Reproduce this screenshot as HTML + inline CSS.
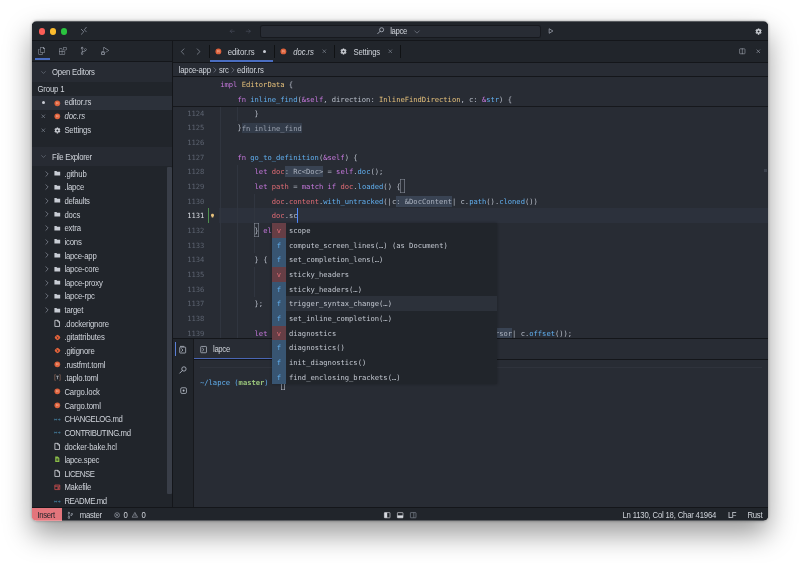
<!DOCTYPE html>
<html><head><meta charset="utf-8"><title>lapce</title>
<style>
html,body{margin:0;padding:0;background:#fff;}
body{width:800px;height:563px;position:relative;overflow:hidden;}
#shadow{position:absolute;border-radius:5px;}
#win{position:absolute;left:0;top:0;width:800px;height:563px;will-change:transform;}
#win div,#win svg{position:absolute;}
.t{white-space:pre;color:#d0d4db;}
.ui{font-family:"Liberation Sans",sans-serif;font-size:7.75px;letter-spacing:-0.16px;transform:scaleY(1.1);transform-origin:0 50%;}
.mono{font-family:"DejaVu Sans Mono","Liberation Mono",monospace;font-size:7.14px;}
.ln{color:#5c6370;text-align:right;}
.k{color:#c678dd}.y{color:#e5c07b}.b{color:#61afef}.r{color:#e06c75}.g{color:#98c379}.c{color:#56b6c2}.w{color:#b9bfca}
.h{background:#394353;color:#aab1be;padding:.9px 0;}.h2{background:#333c4a;color:#9aa1ae;}
svg{overflow:visible}
</style></head><body>

<div id="shadow" style="left:31.6px;top:21.3px;width:736.7px;height:499.5px;box-shadow:0 13px 28px rgba(0,0,0,.40),0 0 3px rgba(0,0,0,.35);"></div>
<div id="win" style="clip-path:inset(21.3px 31.7px 42.2px 31.6px round 5px);">
<div style="left:31.60px;top:21.30px;width:736.70px;height:499.50px;background:#282c34;"></div>
<div style="left:31.60px;top:21.30px;width:736.70px;height:18.70px;background:#21252b;"></div>
<div style="left:31.60px;top:40.00px;width:140.40px;height:467.00px;background:#21252b;"></div>
<div style="left:173.00px;top:41.00px;width:595.30px;height:21.00px;background:#21252b;"></div>
<div style="left:31.60px;top:40.00px;width:736.70px;height:1.00px;background:#14161a;"></div>
<div style="left:172.00px;top:41.00px;width:1.00px;height:466.00px;background:#14161a;"></div>
<div style="left:31.60px;top:61.00px;width:140.40px;height:1.00px;background:#14161a;"></div>
<div style="left:173.00px;top:62.00px;width:595.30px;height:1.00px;background:#14161a;"></div>
<div style="left:173.00px;top:76.00px;width:595.30px;height:1.00px;background:#14161a;"></div>
<div style="left:173.00px;top:106.00px;width:595.30px;height:1.00px;background:#16181c;"></div>
<div style="left:38.65px;top:28.25px;width:6.3px;height:6.3px;border-radius:50%;background:#fb5e57"></div>
<div style="left:49.85px;top:28.25px;width:6.3px;height:6.3px;border-radius:50%;background:#fbbc2e"></div>
<div style="left:61.05px;top:28.25px;width:6.3px;height:6.3px;border-radius:50%;background:#2ac43f"></div>
<svg style="left:79.70px;top:27.20px;width:8.00px;height:8.00px;color:#9da5b4" viewBox="0 0 16 16"><path d="M2.600 4.600 L7.600 9.600 L2.600 14.600" fill="none" stroke="currentColor" stroke-width="1.3" stroke-linecap="round" stroke-linejoin="round" /><path d="M12.600 0.600 L8.600 5.600 L12.600 9.600" fill="none" stroke="currentColor" stroke-width="1.3" stroke-linecap="round" stroke-linejoin="round" /></svg>
<svg style="left:228.95px;top:27.95px;width:6.50px;height:6.50px;color:#4b5160" viewBox="0 0 16 16"><path d="M13 8 H3 M7 4 L3 8 L7 12" fill="none" stroke="currentColor" stroke-width="1.5" stroke-linecap="round" stroke-linejoin="round" /></svg>
<svg style="left:245.45px;top:27.95px;width:6.50px;height:6.50px;color:#4b5160" viewBox="0 0 16 16"><path d="M3 8 H13 M9 4 L13 8 L9 12" fill="none" stroke="currentColor" stroke-width="1.5" stroke-linecap="round" stroke-linejoin="round" /></svg>
<div style="left:260.00px;top:24.60px;width:280.70px;height:13.60px;background:#282c34;border-radius:2.500px;box-shadow:inset 0 0 0 1px #17191e;"></div>
<svg style="left:376.90px;top:27.40px;width:7.40px;height:7.40px;color:#b4bac5" viewBox="0 0 16 16"><path d="M6.6 9.4 L1.6 14.4" fill="none" stroke="currentColor" stroke-width="1.8" stroke-linecap="round" stroke-linejoin="round" /><circle cx="10" cy="6" r="4.4" fill="none" stroke="currentColor" stroke-width="1.7"/></svg>
<div class="t ui" style="left:390.20px;top:25.90px;height:12px;line-height:12px;;letter-spacing:-0.332px;">lapce</div>
<svg style="left:414.20px;top:28.60px;width:6.00px;height:6.00px;color:#8c93a1" viewBox="0 0 16 16"><path d="M2 5 L8 11 L14 5" fill="none" stroke="currentColor" stroke-width="1.5" stroke-linecap="round" stroke-linejoin="round" /></svg>
<svg style="left:548.00px;top:28.40px;width:6.00px;height:6.00px;color:#aeb4c0" viewBox="0 0 16 16"><path d="M4 2.500 L13 8 L4 13.500 Z" fill="none" stroke="currentColor" stroke-width="1.8" stroke-linecap="round" stroke-linejoin="round" /></svg>
<svg style="left:754.95px;top:27.65px;width:7.10px;height:7.10px;color:#d7dae0" viewBox="0 0 16 16"><circle cx="8" cy="8" r="4" fill="none" stroke="currentColor" stroke-width="3.200"/><path d="M12.16 10.40 L14.15 11.55 M8.00 12.80 L8.00 15.10 M3.84 10.40 L1.85 11.55 M3.84 5.60 L1.85 4.45 M8.00 3.20 L8.00 0.90 M12.16 5.60 L14.15 4.45 " stroke="currentColor" stroke-width="3.400" fill="none"/></svg>
<svg style="left:38.25px;top:47.25px;width:7.50px;height:7.50px;color:#a6acb8" viewBox="0 0 24 24"><path d="M17.5 0h-9L7 1.5V6H2.5L1 7.5v15.07L2.5 24h12.07L16 22.57V18h4.7l1.3-1.43V4.5L17.5 0zm0 2.12l2.38 2.38H17.5V2.12zm-3 20.38h-12v-15H7v9.07L8.5 18h6v4.5zm6-6h-12v-15H16V6h4.5v10.5z" fill="currentColor" /></svg>
<svg style="left:59.15px;top:47.25px;width:7.50px;height:7.50px;color:#a6acb8" viewBox="0 0 24 24"><path d="M13.5 1.5L15 0h7.5L24 1.5V9l-1.5 1.5H15L13.5 9V1.5zm1.5 0V9h7.5V1.5H15zM0 15V6l1.5-1.5H9L10.5 6v7.5H18l1.5 1.5v7.5L18 24H1.5L0 22.5V15zm9-1.5V6H1.5v7.5H9zM9 15H1.5v7.5H9V15zm1.5 7.5H18V15h-7.5v7.5z" fill="currentColor" /></svg>
<svg style="left:79.85px;top:47.45px;width:7.50px;height:7.50px;color:#a6acb8" viewBox="0 0 24 24"><path d="M21.007 8.222A3.738 3.738 0 0 0 15.045 5.2a3.737 3.737 0 0 0 1.156 6.583 2.988 2.988 0 0 1-2.668 1.67h-2.99a4.456 4.456 0 0 0-2.989 1.165V7.4a3.737 3.737 0 1 0-1.494 0v9.117a3.776 3.776 0 1 0 1.816.099 2.99 2.99 0 0 1 2.668-1.667h2.99a4.484 4.484 0 0 0 4.223-3.039 3.736 3.736 0 0 0 3.25-3.687zM4.565 3.738a2.242 2.242 0 1 1 4.484 0 2.242 2.242 0 0 1-4.484 0zm4.484 16.441a2.242 2.242 0 1 1-4.484 0 2.242 2.242 0 0 1 4.484 0zm8.221-9.715a2.242 2.242 0 1 1 0-4.485 2.242 2.242 0 0 1 0 4.485z" fill="currentColor" /></svg>
<svg style="left:100.50px;top:47.20px;width:8.00px;height:8.00px;color:#a6acb8" viewBox="0 0 24 24"><path d="M10.94 13.5l-1.32 1.32a3.73 3.73 0 0 0-7.24 0L1.06 13.5 0 14.56l1.72 1.72-.22.22V18H0v1.5h1.5v.08c.077.489.214.966.41 1.42L0 22.94 1.06 24l1.65-1.65A4.308 4.308 0 0 0 6 24a4.31 4.31 0 0 0 3.29-1.65L10.94 24 12 22.94 10.09 21c.198-.464.336-.951.41-1.45v-.1H12V18h-1.5v-1.5l-.22-.22L12 14.56l-1.06-1.06zM6 13.5a2.25 2.25 0 0 1 2.25 2.25h-4.5A2.25 2.25 0 0 1 6 13.5zm3 6a3.33 3.33 0 0 1-3 3 3.33 3.33 0 0 1-3-3v-2.25h6v2.25zm14.76-9.9v1.26L13.5 17.37V15.6l8.5-5.37L9 2v9.46a5.07 5.07 0 0 0-1.5-.72V.63L8.64 0l15.12 9.6z" fill="currentColor" /></svg>
<div style="left:35.00px;top:58.00px;width:14.50px;height:2.00px;background:#4a6dc0;"></div>
<div style="left:31.60px;top:62.00px;width:140.40px;height:20.00px;background:#272b33;"></div>
<svg style="left:41.00px;top:69.70px;width:5.00px;height:5.00px;color:#8c93a1" viewBox="0 0 16 16"><path d="M2 5 L8 11 L14 5" fill="none" stroke="currentColor" stroke-width="1.5" stroke-linecap="round" stroke-linejoin="round" /></svg>
<div class="t ui" style="left:52.00px;top:67.10px;height:12px;line-height:12px;;letter-spacing:-0.203px;">Open Editors</div>
<div class="t ui" style="left:37.50px;top:83.90px;height:12px;line-height:12px;">Group 1</div>
<div style="left:31.60px;top:96.20px;width:140.40px;height:13.40px;background:#2c313a;"></div>
<div style="left:42.2px;top:101.300px;width:3px;height:3px;border-radius:50%;background:#c8ccd4"></div>
<svg style="left:53.90px;top:99.50px;width:6.60px;height:6.60px;" viewBox="0 0 16 16"><circle cx="8" cy="8" r="6.900" fill="#dd613b"/><path d="M5 5.800 H9.300 Q11 5.800 11 7.200 Q11 8.500 9.300 8.500 H6 M9.300 8.500 L11 10.800 M6 5.800 V10.800" stroke="#f3b9a3" stroke-width="1.300" fill="none" opacity=".8"/></svg>
<div class="t ui" style="left:64.40px;top:97.30px;height:12px;line-height:12px;;letter-spacing:-0.071px;">editor.rs</div>
<svg style="left:41.40px;top:114.30px;width:4.60px;height:4.60px;color:#9299a6" viewBox="0 0 16 16"><path d="M3 3 L13 13 M13 3 L3 13" fill="none" stroke="currentColor" stroke-width="1.9" stroke-linecap="round" stroke-linejoin="round" /></svg>
<svg style="left:53.90px;top:113.20px;width:6.60px;height:6.60px;" viewBox="0 0 16 16"><circle cx="8" cy="8" r="6.900" fill="#dd613b"/><path d="M5 5.800 H9.300 Q11 5.800 11 7.200 Q11 8.500 9.300 8.500 H6 M9.300 8.500 L11 10.800 M6 5.800 V10.800" stroke="#f3b9a3" stroke-width="1.300" fill="none" opacity=".8"/></svg>
<div class="t ui" style="left:64.40px;top:111.00px;height:12px;line-height:12px;font-style:italic;letter-spacing:-0.061px;">doc.rs</div>
<svg style="left:41.40px;top:128.10px;width:4.60px;height:4.60px;color:#9299a6" viewBox="0 0 16 16"><path d="M3 3 L13 13 M13 3 L3 13" fill="none" stroke="currentColor" stroke-width="1.9" stroke-linecap="round" stroke-linejoin="round" /></svg>
<svg style="left:53.80px;top:126.90px;width:6.80px;height:6.80px;color:#d7dae0" viewBox="0 0 16 16"><circle cx="8" cy="8" r="4" fill="none" stroke="currentColor" stroke-width="3.200"/><path d="M12.16 10.40 L14.15 11.55 M8.00 12.80 L8.00 15.10 M3.84 10.40 L1.85 11.55 M3.84 5.60 L1.85 4.45 M8.00 3.20 L8.00 0.90 M12.16 5.60 L14.15 4.45 " stroke="currentColor" stroke-width="3.400" fill="none"/></svg>
<div class="t ui" style="left:64.40px;top:124.80px;height:12px;line-height:12px;;letter-spacing:-0.186px;">Settings</div>
<div style="left:31.60px;top:147.00px;width:140.40px;height:19.40px;background:#272b33;"></div>
<svg style="left:41.00px;top:154.40px;width:5.00px;height:5.00px;color:#8c93a1" viewBox="0 0 16 16"><path d="M2 5 L8 11 L14 5" fill="none" stroke="currentColor" stroke-width="1.5" stroke-linecap="round" stroke-linejoin="round" /></svg>
<div class="t ui" style="left:52.00px;top:152.10px;height:12px;line-height:12px;;letter-spacing:-0.275px;">File Explorer</div>
<svg style="left:43.90px;top:170.55px;width:6.00px;height:6.00px;color:#a4aab6" viewBox="0 0 16 16"><path d="M5 2 L11 8 L5 14" fill="none" stroke="currentColor" stroke-width="1.5" stroke-linecap="round" stroke-linejoin="round" /></svg>
<svg style="left:53.95px;top:170.10px;width:6.60px;height:6.60px;color:#c8ccd4" viewBox="0 0 16 16"><path d="M1 2.500 H6 L7.500 4.500 H15 V13.500 H1 Z" fill="currentColor" /></svg>
<div class="t ui" style="left:64.40px;top:168.70px;height:12px;line-height:12px;;letter-spacing:-0.162px;">.github</div>
<svg style="left:43.90px;top:184.19px;width:6.00px;height:6.00px;color:#a4aab6" viewBox="0 0 16 16"><path d="M5 2 L11 8 L5 14" fill="none" stroke="currentColor" stroke-width="1.5" stroke-linecap="round" stroke-linejoin="round" /></svg>
<svg style="left:53.95px;top:183.74px;width:6.60px;height:6.60px;color:#c8ccd4" viewBox="0 0 16 16"><path d="M1 2.500 H6 L7.500 4.500 H15 V13.500 H1 Z" fill="currentColor" /></svg>
<div class="t ui" style="left:64.40px;top:182.34px;height:12px;line-height:12px;">.lapce</div>
<svg style="left:43.90px;top:197.83px;width:6.00px;height:6.00px;color:#a4aab6" viewBox="0 0 16 16"><path d="M5 2 L11 8 L5 14" fill="none" stroke="currentColor" stroke-width="1.5" stroke-linecap="round" stroke-linejoin="round" /></svg>
<svg style="left:53.95px;top:197.38px;width:6.60px;height:6.60px;color:#c8ccd4" viewBox="0 0 16 16"><path d="M1 2.500 H6 L7.500 4.500 H15 V13.500 H1 Z" fill="currentColor" /></svg>
<div class="t ui" style="left:64.40px;top:195.98px;height:12px;line-height:12px;;letter-spacing:-0.221px;">defaults</div>
<svg style="left:43.90px;top:211.47px;width:6.00px;height:6.00px;color:#a4aab6" viewBox="0 0 16 16"><path d="M5 2 L11 8 L5 14" fill="none" stroke="currentColor" stroke-width="1.5" stroke-linecap="round" stroke-linejoin="round" /></svg>
<svg style="left:53.95px;top:211.02px;width:6.60px;height:6.60px;color:#c8ccd4" viewBox="0 0 16 16"><path d="M1 2.500 H6 L7.500 4.500 H15 V13.500 H1 Z" fill="currentColor" /></svg>
<div class="t ui" style="left:64.40px;top:209.62px;height:12px;line-height:12px;">docs</div>
<svg style="left:43.90px;top:225.11px;width:6.00px;height:6.00px;color:#a4aab6" viewBox="0 0 16 16"><path d="M5 2 L11 8 L5 14" fill="none" stroke="currentColor" stroke-width="1.5" stroke-linecap="round" stroke-linejoin="round" /></svg>
<svg style="left:53.95px;top:224.66px;width:6.60px;height:6.60px;color:#c8ccd4" viewBox="0 0 16 16"><path d="M1 2.500 H6 L7.500 4.500 H15 V13.500 H1 Z" fill="currentColor" /></svg>
<div class="t ui" style="left:64.40px;top:223.26px;height:12px;line-height:12px;">extra</div>
<svg style="left:43.90px;top:238.75px;width:6.00px;height:6.00px;color:#a4aab6" viewBox="0 0 16 16"><path d="M5 2 L11 8 L5 14" fill="none" stroke="currentColor" stroke-width="1.5" stroke-linecap="round" stroke-linejoin="round" /></svg>
<svg style="left:53.95px;top:238.30px;width:6.60px;height:6.60px;color:#c8ccd4" viewBox="0 0 16 16"><path d="M1 2.500 H6 L7.500 4.500 H15 V13.500 H1 Z" fill="currentColor" /></svg>
<div class="t ui" style="left:64.40px;top:236.90px;height:12px;line-height:12px;">icons</div>
<svg style="left:43.90px;top:252.39px;width:6.00px;height:6.00px;color:#a4aab6" viewBox="0 0 16 16"><path d="M5 2 L11 8 L5 14" fill="none" stroke="currentColor" stroke-width="1.5" stroke-linecap="round" stroke-linejoin="round" /></svg>
<svg style="left:53.95px;top:251.94px;width:6.60px;height:6.60px;color:#c8ccd4" viewBox="0 0 16 16"><path d="M1 2.500 H6 L7.500 4.500 H15 V13.500 H1 Z" fill="currentColor" /></svg>
<div class="t ui" style="left:64.40px;top:250.54px;height:12px;line-height:12px;;letter-spacing:-0.218px;">lapce-app</div>
<svg style="left:43.90px;top:266.03px;width:6.00px;height:6.00px;color:#a4aab6" viewBox="0 0 16 16"><path d="M5 2 L11 8 L5 14" fill="none" stroke="currentColor" stroke-width="1.5" stroke-linecap="round" stroke-linejoin="round" /></svg>
<svg style="left:53.95px;top:265.58px;width:6.60px;height:6.60px;color:#c8ccd4" viewBox="0 0 16 16"><path d="M1 2.500 H6 L7.500 4.500 H15 V13.500 H1 Z" fill="currentColor" /></svg>
<div class="t ui" style="left:64.40px;top:264.18px;height:12px;line-height:12px;">lapce-core</div>
<svg style="left:43.90px;top:279.67px;width:6.00px;height:6.00px;color:#a4aab6" viewBox="0 0 16 16"><path d="M5 2 L11 8 L5 14" fill="none" stroke="currentColor" stroke-width="1.5" stroke-linecap="round" stroke-linejoin="round" /></svg>
<svg style="left:53.95px;top:279.22px;width:6.60px;height:6.60px;color:#c8ccd4" viewBox="0 0 16 16"><path d="M1 2.500 H6 L7.500 4.500 H15 V13.500 H1 Z" fill="currentColor" /></svg>
<div class="t ui" style="left:64.40px;top:277.82px;height:12px;line-height:12px;">lapce-proxy</div>
<svg style="left:43.90px;top:293.31px;width:6.00px;height:6.00px;color:#a4aab6" viewBox="0 0 16 16"><path d="M5 2 L11 8 L5 14" fill="none" stroke="currentColor" stroke-width="1.5" stroke-linecap="round" stroke-linejoin="round" /></svg>
<svg style="left:53.95px;top:292.86px;width:6.60px;height:6.60px;color:#c8ccd4" viewBox="0 0 16 16"><path d="M1 2.500 H6 L7.500 4.500 H15 V13.500 H1 Z" fill="currentColor" /></svg>
<div class="t ui" style="left:64.40px;top:291.46px;height:12px;line-height:12px;">lapce-rpc</div>
<svg style="left:43.90px;top:306.95px;width:6.00px;height:6.00px;color:#a4aab6" viewBox="0 0 16 16"><path d="M5 2 L11 8 L5 14" fill="none" stroke="currentColor" stroke-width="1.5" stroke-linecap="round" stroke-linejoin="round" /></svg>
<svg style="left:53.95px;top:306.50px;width:6.60px;height:6.60px;color:#c8ccd4" viewBox="0 0 16 16"><path d="M1 2.500 H6 L7.500 4.500 H15 V13.500 H1 Z" fill="currentColor" /></svg>
<div class="t ui" style="left:64.40px;top:305.10px;height:12px;line-height:12px;">target</div>
<svg style="left:53.90px;top:319.79px;width:6.80px;height:6.80px;color:#d7dae0" viewBox="0 0 16 16"><path d="M3 0.800 H9.500 L13 4.500 V15.200 H3 Z M9.200 1 V4.800 H12.800" fill="none" stroke="currentColor" stroke-width="1.9" stroke-linecap="round" stroke-linejoin="round" /></svg>
<div class="t ui" style="left:64.40px;top:318.74px;height:12px;line-height:12px;;letter-spacing:-0.197px;">.dockerignore</div>
<svg style="left:53.80px;top:333.53px;width:7.00px;height:7.00px;" viewBox="0 0 16 16"><rect x="2.700" y="2.700" width="10.600" height="10.600" rx="3" transform="rotate(45 8 8)" fill="#e2623a"/><path d="M6 5.500 L10 9.500 M8 7.500 V11" stroke="#21252b" stroke-width="1.300" fill="none"/></svg>
<div class="t ui" style="left:64.40px;top:332.38px;height:12px;line-height:12px;;letter-spacing:-0.140px;">.gitattributes</div>
<svg style="left:53.80px;top:347.17px;width:7.00px;height:7.00px;" viewBox="0 0 16 16"><rect x="2.700" y="2.700" width="10.600" height="10.600" rx="3" transform="rotate(45 8 8)" fill="#e2623a"/><path d="M6 5.500 L10 9.500 M8 7.500 V11" stroke="#21252b" stroke-width="1.300" fill="none"/></svg>
<div class="t ui" style="left:64.40px;top:346.02px;height:12px;line-height:12px;">.gitignore</div>
<svg style="left:54.00px;top:361.01px;width:6.60px;height:6.60px;" viewBox="0 0 16 16"><circle cx="8" cy="8" r="6.900" fill="#dd613b"/><path d="M5 5.800 H9.300 Q11 5.800 11 7.200 Q11 8.500 9.300 8.500 H6 M9.300 8.500 L11 10.800 M6 5.800 V10.800" stroke="#f3b9a3" stroke-width="1.300" fill="none" opacity=".8"/></svg>
<div class="t ui" style="left:64.40px;top:359.66px;height:12px;line-height:12px;;letter-spacing:-0.127px;">.rustfmt.toml</div>
<svg style="left:53.80px;top:374.45px;width:7.00px;height:7.00px;" viewBox="0 0 16 16"><path d="M4 1.500 H1.800 V14.500 H4 M12 1.500 H14.200 V14.500 H12" stroke="#9c6f5c" stroke-width="1.400" fill="none"/><path d="M5 5 H11 M8 5 V12" stroke="#c8ccd4" stroke-width="1.500" fill="none"/></svg>
<div class="t ui" style="left:64.40px;top:373.30px;height:12px;line-height:12px;">.taplo.toml</div>
<svg style="left:54.00px;top:388.29px;width:6.60px;height:6.60px;" viewBox="0 0 16 16"><circle cx="8" cy="8" r="6.900" fill="#dd613b"/><path d="M5 5.800 H9.300 Q11 5.800 11 7.200 Q11 8.500 9.300 8.500 H6 M9.300 8.500 L11 10.800 M6 5.800 V10.800" stroke="#f3b9a3" stroke-width="1.300" fill="none" opacity=".8"/></svg>
<div class="t ui" style="left:64.40px;top:386.94px;height:12px;line-height:12px;">Cargo.lock</div>
<svg style="left:54.00px;top:401.93px;width:6.60px;height:6.60px;" viewBox="0 0 16 16"><circle cx="8" cy="8" r="6.900" fill="#dd613b"/><path d="M5 5.800 H9.300 Q11 5.800 11 7.200 Q11 8.500 9.300 8.500 H6 M9.300 8.500 L11 10.800 M6 5.800 V10.800" stroke="#f3b9a3" stroke-width="1.300" fill="none" opacity=".8"/></svg>
<div class="t ui" style="left:64.40px;top:400.58px;height:12px;line-height:12px;">Cargo.toml</div>
<svg style="left:53.80px;top:415.67px;width:7.00px;height:7.00px;" viewBox="0 0 16 16"><path d="M1.500 10 V6.500 L3.700 9 L6 6.500 V10 M9 8.200 H14 M12.300 6.500 L14.300 8.200 L12.300 10" stroke="#4a8db0" stroke-width="1.500" fill="none"/></svg>
<div class="t ui" style="left:64.40px;top:414.22px;height:12px;line-height:12px;;letter-spacing:-0.359px;">CHANGELOG.md</div>
<svg style="left:53.80px;top:429.31px;width:7.00px;height:7.00px;" viewBox="0 0 16 16"><path d="M1.500 10 V6.500 L3.700 9 L6 6.500 V10 M9 8.200 H14 M12.300 6.500 L14.300 8.200 L12.300 10" stroke="#4a8db0" stroke-width="1.500" fill="none"/></svg>
<div class="t ui" style="left:64.40px;top:427.86px;height:12px;line-height:12px;;letter-spacing:-0.379px;">CONTRIBUTING.md</div>
<svg style="left:53.90px;top:442.55px;width:6.80px;height:6.80px;color:#d7dae0" viewBox="0 0 16 16"><path d="M3 0.800 H9.500 L13 4.500 V15.200 H3 Z M9.200 1 V4.800 H12.800" fill="none" stroke="currentColor" stroke-width="1.9" stroke-linecap="round" stroke-linejoin="round" /></svg>
<div class="t ui" style="left:64.40px;top:441.50px;height:12px;line-height:12px;;letter-spacing:-0.158px;">docker-bake.hcl</div>
<svg style="left:54.00px;top:456.49px;width:6.60px;height:6.60px;" viewBox="0 0 16 16"><path d="M3 1.500 H9 L13 5 V14.500 H3 Z" fill="#8dc149"/><path d="M5 7.500 H11 M5 10 H11 M8 6 V12.500" stroke="#21252b" stroke-width="1.200"/></svg>
<div class="t ui" style="left:64.40px;top:455.14px;height:12px;line-height:12px;;letter-spacing:-0.217px;">lapce.spec</div>
<svg style="left:53.90px;top:469.83px;width:6.80px;height:6.80px;color:#d7dae0" viewBox="0 0 16 16"><path d="M3 0.800 H9.500 L13 4.500 V15.200 H3 Z M9.200 1 V4.800 H12.800" fill="none" stroke="currentColor" stroke-width="1.9" stroke-linecap="round" stroke-linejoin="round" /></svg>
<div class="t ui" style="left:64.40px;top:468.78px;height:12px;line-height:12px;;letter-spacing:-0.450px;">LICENSE</div>
<svg style="left:54.00px;top:483.77px;width:6.60px;height:6.60px;" viewBox="0 0 16 16"><path d="M2 2.500 H14 V13.500 H2 Z M2 5.500 H14" stroke="#e05252" stroke-width="1.700" fill="none"/><rect x="8.500" y="8" width="3.500" height="3.500" fill="#e05252"/></svg>
<div class="t ui" style="left:64.40px;top:482.42px;height:12px;line-height:12px;;letter-spacing:-0.294px;">Makefile</div>
<svg style="left:53.80px;top:497.51px;width:7.00px;height:7.00px;" viewBox="0 0 16 16"><path d="M1.500 10 V6.500 L3.700 9 L6 6.500 V10 M9 8.200 H14 M12.300 6.500 L14.300 8.200 L12.300 10" stroke="#4a8db0" stroke-width="1.500" fill="none"/></svg>
<div class="t ui" style="left:64.40px;top:496.06px;height:12px;line-height:12px;;letter-spacing:-0.435px;">README.md</div>
<div style="left:167.00px;top:166.50px;width:4.60px;height:327.00px;background:#393e48;border-radius:1px"></div>
<svg style="left:178.60px;top:47.90px;width:7.20px;height:7.20px;color:#959ca9" viewBox="0 0 16 16"><path d="M11 2 L5 8 L11 14" fill="none" stroke="currentColor" stroke-width="1.5" stroke-linecap="round" stroke-linejoin="round" /></svg>
<svg style="left:195.30px;top:47.90px;width:7.20px;height:7.20px;color:#959ca9" viewBox="0 0 16 16"><path d="M5 2 L11 8 L5 14" fill="none" stroke="currentColor" stroke-width="1.5" stroke-linecap="round" stroke-linejoin="round" /></svg>
<div style="left:209.00px;top:45.00px;width:1.00px;height:13.00px;background:#101214;"></div>
<svg style="left:215.30px;top:48.00px;width:6.80px;height:6.80px;" viewBox="0 0 16 16"><circle cx="8" cy="8" r="6.900" fill="#dd613b"/><path d="M5 5.800 H9.300 Q11 5.800 11 7.200 Q11 8.500 9.300 8.500 H6 M9.300 8.500 L11 10.800 M6 5.800 V10.800" stroke="#f3b9a3" stroke-width="1.300" fill="none" opacity=".8"/></svg>
<div class="t ui" style="left:227.70px;top:46.70px;height:12px;line-height:12px;;letter-spacing:-0.071px;">editor.rs</div>
<div style="left:262.7px;top:49.800px;width:3px;height:3px;border-radius:50%;background:#c8ccd4"></div>
<div style="left:210.30px;top:60.30px;width:63.00px;height:1.70px;background:#4a6dc0;"></div>
<div style="left:274.00px;top:45.00px;width:1.00px;height:13.00px;background:#101214;"></div>
<svg style="left:280.40px;top:48.00px;width:6.80px;height:6.80px;" viewBox="0 0 16 16"><circle cx="8" cy="8" r="6.900" fill="#dd613b"/><path d="M5 5.800 H9.300 Q11 5.800 11 7.200 Q11 8.500 9.300 8.500 H6 M9.300 8.500 L11 10.800 M6 5.800 V10.800" stroke="#f3b9a3" stroke-width="1.300" fill="none" opacity=".8"/></svg>
<div class="t ui" style="left:293.20px;top:46.70px;height:12px;line-height:12px;font-style:italic;letter-spacing:-0.061px;">doc.rs</div>
<svg style="left:321.70px;top:49.10px;width:4.60px;height:4.60px;color:#9299a6" viewBox="0 0 16 16"><path d="M3 3 L13 13 M13 3 L3 13" fill="none" stroke="currentColor" stroke-width="1.9" stroke-linecap="round" stroke-linejoin="round" /></svg>
<div style="left:334.00px;top:45.00px;width:1.00px;height:13.00px;background:#101214;"></div>
<svg style="left:340.00px;top:47.80px;width:7.00px;height:7.00px;color:#d7dae0" viewBox="0 0 16 16"><circle cx="8" cy="8" r="4" fill="none" stroke="currentColor" stroke-width="3.200"/><path d="M12.16 10.40 L14.15 11.55 M8.00 12.80 L8.00 15.10 M3.84 10.40 L1.85 11.55 M3.84 5.60 L1.85 4.45 M8.00 3.20 L8.00 0.90 M12.16 5.60 L14.15 4.45 " stroke="currentColor" stroke-width="3.400" fill="none"/></svg>
<div class="t ui" style="left:353.50px;top:46.70px;height:12px;line-height:12px;;letter-spacing:-0.186px;">Settings</div>
<svg style="left:387.70px;top:49.10px;width:4.60px;height:4.60px;color:#9299a6" viewBox="0 0 16 16"><path d="M3 3 L13 13 M13 3 L3 13" fill="none" stroke="currentColor" stroke-width="1.9" stroke-linecap="round" stroke-linejoin="round" /></svg>
<div style="left:400.30px;top:45.00px;width:1.00px;height:13.00px;background:#101214;"></div>
<svg style="left:738.90px;top:47.80px;width:6.60px;height:6.60px;color:#aeb4c0" viewBox="0 0 16 16"><rect x="1.500" y="2" width="13" height="12" rx="1.300" fill="none" stroke="currentColor" stroke-width="1.300"/><path d="M8 2 V14" fill="none" stroke="currentColor" stroke-width="1.3" stroke-linecap="round" stroke-linejoin="round" /></svg>
<svg style="left:756.20px;top:49.00px;width:4.60px;height:4.60px;color:#aeb4c0" viewBox="0 0 16 16"><path d="M3 3 L13 13 M13 3 L3 13" fill="none" stroke="currentColor" stroke-width="1.9" stroke-linecap="round" stroke-linejoin="round" /></svg>
<div class="t ui" style="left:178.70px;top:64.90px;height:12px;line-height:12px;;letter-spacing:-0.218px;">lapce-app</div>
<svg style="left:212.20px;top:66.90px;width:6.00px;height:6.00px;color:#8c93a1" viewBox="0 0 16 16"><path d="M5 2 L11 8 L5 14" fill="none" stroke="currentColor" stroke-width="1.5" stroke-linecap="round" stroke-linejoin="round" /></svg>
<div class="t ui" style="left:219.00px;top:64.90px;height:12px;line-height:12px;;letter-spacing:-0.166px;">src</div>
<svg style="left:230.20px;top:66.90px;width:6.00px;height:6.00px;color:#8c93a1" viewBox="0 0 16 16"><path d="M5 2 L11 8 L5 14" fill="none" stroke="currentColor" stroke-width="1.5" stroke-linecap="round" stroke-linejoin="round" /></svg>
<div class="t ui" style="left:237.00px;top:64.90px;height:12px;line-height:12px;;letter-spacing:-0.071px;">editor.rs</div>
<div style="left:219.40px;top:208.20px;width:548.90px;height:14.70px;background:#2c313c;"></div>
<div style="left:207.60px;top:208.20px;width:1.40px;height:14.70px;background:#4f8f4f;"></div>
<svg style="left:209.60px;top:212.50px;width:5.00px;height:6.00px;color:#e5c07b" viewBox="0 0 16 16"><path d="M8 1 C4.800 1 3 3.300 3 5.800 C3 7.600 4 8.800 5 9.800 V11.500 H11 V9.800 C12 8.800 13 7.600 13 5.800 C13 3.300 11.200 1 8 1 Z M5.500 12.500 H10.500 V14 H5.500 Z" fill="currentColor" /></svg>
<div style="left:220.10px;top:107.00px;width:1.00px;height:231.00px;background:#30353f;"></div>
<div style="left:237.29px;top:107.00px;width:1.00px;height:13.50px;background:#30353f;"></div>
<div style="left:237.29px;top:164.50px;width:1.00px;height:173.50px;background:#30353f;"></div>
<div style="left:254.49px;top:194.00px;width:1.00px;height:29.00px;background:#30353f;"></div>
<div style="left:254.49px;top:238.00px;width:1.00px;height:14.50px;background:#30353f;"></div>
<div style="left:254.49px;top:267.00px;width:1.00px;height:29.50px;background:#30353f;"></div>
<div class="t mono" style="left:220.20px;top:77.75px;height:14px;line-height:14px;"><span class="k">impl</span><span class="w"> </span><span class="y">EditorData</span><span class="w"> {</span></div>
<div class="t mono" style="left:237.39px;top:92.75px;height:14px;line-height:14px;"><span class="k">fn</span><span class="w"> </span><span class="b">inline_find</span><span class="w">(</span><span class="k">&amp;self</span><span class="w">, direction: </span><span class="y">InlineFindDirection</span><span class="w">, c: </span><span class="k">&amp;</span><span class="b">str</span><span class="w">) {</span></div>
<div class="t mono ln" style="left:180px;width:24.300px;top:106.75px;height:14px;line-height:14px;">1124</div>
<div class="t mono" style="left:254.59px;top:106.75px;height:14px;line-height:14px;"><span class="w">}</span></div>
<div class="t mono ln" style="left:180px;width:24.300px;top:121.40px;height:14px;line-height:14px;">1125</div>
<div class="t mono" style="left:237.39px;top:121.40px;height:14px;line-height:14px;"><span class="w">}</span><span class="h h2">fn inline_find</span></div>
<div class="t mono ln" style="left:180px;width:24.300px;top:136.05px;height:14px;line-height:14px;">1126</div>
<div class="t mono ln" style="left:180px;width:24.300px;top:150.70px;height:14px;line-height:14px;">1127</div>
<div class="t mono" style="left:237.39px;top:150.70px;height:14px;line-height:14px;"><span class="k">fn</span><span class="w"> </span><span class="b">go_to_definition</span><span class="w">(</span><span class="k">&amp;self</span><span class="w">) {</span></div>
<div class="t mono ln" style="left:180px;width:24.300px;top:165.35px;height:14px;line-height:14px;">1128</div>
<div class="t mono" style="left:254.59px;top:165.35px;height:14px;line-height:14px;"><span class="k">let</span><span class="w"> </span><span class="r">doc</span><span class="h">: Rc&lt;Doc&gt;</span><span class="w"> = </span><span class="k">self</span><span class="w">.</span><span class="b">doc</span><span class="w">();</span></div>
<div class="t mono ln" style="left:180px;width:24.300px;top:180.00px;height:14px;line-height:14px;">1129</div>
<div class="t mono" style="left:254.59px;top:180.00px;height:14px;line-height:14px;"><span class="k">let</span><span class="w"> </span><span class="r">path</span><span class="w"> = </span><span class="k">match</span><span class="w"> </span><span class="k">if</span><span class="w"> </span><span class="r">doc</span><span class="w">.</span><span class="b">loaded</span><span class="w">() {</span></div>
<div class="t mono ln" style="left:180px;width:24.300px;top:194.65px;height:14px;line-height:14px;">1130</div>
<div class="t mono" style="left:271.78px;top:194.65px;height:14px;line-height:14px;"><span class="r">doc</span><span class="w">.</span><span class="r">content</span><span class="w">.</span><span class="b">with_untracked</span><span class="w">(|c</span><span class="h">: &amp;DocContent</span><span class="w">| c.</span><span class="b">path</span><span class="w">().</span><span class="b">cloned</span><span class="w">())</span></div>
<div class="t mono ln" style="left:180px;width:24.300px;top:209.30px;height:14px;line-height:14px;color:#d7dae0;">1131</div>
<div class="t mono" style="left:271.78px;top:209.30px;height:14px;line-height:14px;"><span class="r">doc</span><span class="w">.sc</span></div>
<div class="t mono ln" style="left:180px;width:24.300px;top:223.95px;height:14px;line-height:14px;">1132</div>
<div class="t mono" style="left:254.59px;top:223.95px;height:14px;line-height:14px;"><span class="w">} </span><span class="k">else</span><span class="w"> {</span></div>
<div class="t mono ln" style="left:180px;width:24.300px;top:238.60px;height:14px;line-height:14px;">1133</div>
<div class="t mono" style="left:271.78px;top:238.60px;height:14px;line-height:14px;"><span class="y">None</span></div>
<div class="t mono ln" style="left:180px;width:24.300px;top:253.25px;height:14px;line-height:14px;">1134</div>
<div class="t mono" style="left:254.59px;top:253.25px;height:14px;line-height:14px;"><span class="w">} {</span></div>
<div class="t mono ln" style="left:180px;width:24.300px;top:267.90px;height:14px;line-height:14px;">1135</div>
<div class="t mono" style="left:271.78px;top:267.90px;height:14px;line-height:14px;"><span class="y">Some</span><span class="w">(</span><span class="r">path</span><span class="w">) =&gt; </span><span class="r">path</span><span class="w">,</span></div>
<div class="t mono ln" style="left:180px;width:24.300px;top:282.55px;height:14px;line-height:14px;">1136</div>
<div class="t mono" style="left:271.78px;top:282.55px;height:14px;line-height:14px;"><span class="y">None</span><span class="w"> =&gt; </span><span class="k">return</span><span class="w">,</span></div>
<div class="t mono ln" style="left:180px;width:24.300px;top:297.20px;height:14px;line-height:14px;">1137</div>
<div class="t mono" style="left:254.59px;top:297.20px;height:14px;line-height:14px;"><span class="w">};</span></div>
<div class="t mono ln" style="left:180px;width:24.300px;top:311.85px;height:14px;line-height:14px;">1138</div>
<div class="t mono ln" style="left:180px;width:24.300px;top:326.50px;height:14px;line-height:14px;">1139</div>
<div class="t mono" style="left:254.59px;top:326.50px;height:14px;line-height:14px;"><span class="k">let</span><span class="w"> </span><span class="r">offset</span><span class="h">: usize</span><span class="w"> = </span><span class="k">self</span><span class="w">.</span><span class="b">cursor</span><span class="w">().</span><span class="b">with_untracked</span><span class="w">(|c</span><span class="h">: &amp;Cursor</span><span class="w">| c.</span><span class="b">offset</span><span class="w">());</span></div>
<div style="left:400.44px;top:179.05px;width:4.90px;height:14.40px;background:transparent;box-shadow:inset 0 0 0 .6px #8b919d;"></div>
<div style="left:254.29px;top:223.00px;width:4.90px;height:14.40px;background:transparent;box-shadow:inset 0 0 0 .6px #8b919d;"></div>
<div style="left:297.17px;top:208.40px;width:1.00px;height:14.30px;background:#528bff;"></div>
<div style="left:763.50px;top:168.50px;width:3.00px;height:3.50px;background:#3b404b;"></div>
<div style="left:173.00px;top:338.00px;width:595.30px;height:169.00px;background:#282c34;"></div>
<div style="left:173.00px;top:338.00px;width:20.50px;height:169.00px;background:#21252b;"></div>
<div style="left:173.00px;top:338.00px;width:595.30px;height:1.00px;background:#14161a;"></div>
<div style="left:193.00px;top:339.00px;width:1.00px;height:168.00px;background:#17191d;"></div>
<div style="left:194.00px;top:359.00px;width:574.30px;height:1.00px;background:#14161a;"></div>
<div style="left:194.00px;top:358.00px;width:90.00px;height:1.00px;background:#4a66b4;"></div>
<div style="left:174.70px;top:341.60px;width:1.30px;height:14.40px;background:#5a7fd6;"></div>
<svg style="left:179.40px;top:345.60px;width:7.40px;height:7.40px;color:#b4bac5" viewBox="0 0 16 16"><rect x="1.6" y="2.4" width="12.8" height="12.8" rx="1.4" fill="none" stroke="currentColor" stroke-width="1.7"/><path d="M5.6 6 L8.6 8.8 L5.6 11.6" fill="none" stroke="currentColor" stroke-width="1.7" stroke-linecap="round" stroke-linejoin="round" /><path d="M3 0.8 H10.5" fill="none" stroke="currentColor" stroke-width="1.6" stroke-linecap="round" stroke-linejoin="round" /></svg>
<svg style="left:179.45px;top:365.55px;width:7.90px;height:7.90px;color:#b4bac5" viewBox="0 0 16 16"><path d="M6.6 9.4 L1.6 14.4" fill="none" stroke="currentColor" stroke-width="1.8" stroke-linecap="round" stroke-linejoin="round" /><circle cx="10" cy="6" r="4.4" fill="none" stroke="currentColor" stroke-width="1.7"/></svg>
<svg style="left:179.60px;top:387.10px;width:7.20px;height:7.20px;color:#b4bac5" viewBox="0 0 16 16"><rect x="1.6" y="1.6" width="12.8" height="12.8" rx="3" fill="none" stroke="currentColor" stroke-width="1.7"/><circle cx="8" cy="8" r="2.3" fill="currentColor"/></svg>
<svg style="left:199.80px;top:345.80px;width:7.20px;height:7.20px;color:#b4bac5" viewBox="0 0 16 16"><rect x="1.6" y="1" width="12.8" height="14" rx="1.4" fill="none" stroke="currentColor" stroke-width="1.7"/><path d="M5.6 5 L8.8 8 L5.6 11" fill="none" stroke="currentColor" stroke-width="1.7" stroke-linecap="round" stroke-linejoin="round" /></svg>
<div class="t ui" style="left:213.00px;top:343.80px;height:12px;line-height:12px;;letter-spacing:-0.332px;">lapce</div>
<div style="left:200.00px;top:367.00px;width:562.00px;height:1.00px;background:#2f333c;"></div>
<div class="t mono" style="left:200.00px;top:376.05px;height:14px;line-height:14px;"><span class="b">~/lapce (</span><span class="g" style="font-weight:bold">master</span><span class="b">)</span></div>
<div style="left:281.00px;top:375.80px;width:4.30px;height:14.00px;background:transparent;box-shadow:inset 0 0 0 .6px #b4bac6;"></div>
<div style="left:271.60px;top:223.00px;width:225.00px;height:161.35px;background:#21252b;box-shadow:0 0 3px rgba(0,0,0,.3);"></div>
<div style="left:271.60px;top:223.00px;width:14.40px;height:14.70px;background:#663e45;"></div>
<div class="t mono" style="left:276.65px;top:224.07px;height:14px;line-height:14px;color:#e06c75">v</div>
<div class="t mono" style="left:289.00px;top:224.07px;height:14px;line-height:14px;color:#c3c8d1">scope</div>
<div style="left:271.60px;top:237.65px;width:14.40px;height:14.70px;background:#385572;"></div>
<div class="t mono" style="left:276.65px;top:238.72px;height:14px;line-height:14px;color:#61afef">f</div>
<div class="t mono" style="left:289.00px;top:238.72px;height:14px;line-height:14px;color:#c3c8d1">compute_screen_lines(…) (as Document)</div>
<div style="left:271.60px;top:252.30px;width:14.40px;height:14.70px;background:#385572;"></div>
<div class="t mono" style="left:276.65px;top:253.38px;height:14px;line-height:14px;color:#61afef">f</div>
<div class="t mono" style="left:289.00px;top:253.38px;height:14px;line-height:14px;color:#c3c8d1">set_completion_lens(…)</div>
<div style="left:271.60px;top:266.95px;width:14.40px;height:14.70px;background:#663e45;"></div>
<div class="t mono" style="left:276.65px;top:268.02px;height:14px;line-height:14px;color:#e06c75">v</div>
<div class="t mono" style="left:289.00px;top:268.02px;height:14px;line-height:14px;color:#c3c8d1">sticky_headers</div>
<div style="left:271.60px;top:281.60px;width:14.40px;height:14.70px;background:#385572;"></div>
<div class="t mono" style="left:276.65px;top:282.68px;height:14px;line-height:14px;color:#61afef">f</div>
<div class="t mono" style="left:289.00px;top:282.68px;height:14px;line-height:14px;color:#c3c8d1">sticky_headers(…)</div>
<div style="left:271.60px;top:296.25px;width:225.00px;height:14.65px;background:#2c313a;"></div>
<div style="left:271.60px;top:296.25px;width:14.40px;height:14.70px;background:#385572;"></div>
<div class="t mono" style="left:276.65px;top:297.32px;height:14px;line-height:14px;color:#61afef">f</div>
<div class="t mono" style="left:289.00px;top:297.32px;height:14px;line-height:14px;color:#c3c8d1">trigger_syntax_change(…)</div>
<div style="left:271.60px;top:310.90px;width:14.40px;height:14.70px;background:#385572;"></div>
<div class="t mono" style="left:276.65px;top:311.97px;height:14px;line-height:14px;color:#61afef">f</div>
<div class="t mono" style="left:289.00px;top:311.97px;height:14px;line-height:14px;color:#c3c8d1">set_inline_completion(…)</div>
<div style="left:271.60px;top:325.55px;width:14.40px;height:14.70px;background:#663e45;"></div>
<div class="t mono" style="left:276.65px;top:326.62px;height:14px;line-height:14px;color:#e06c75">v</div>
<div class="t mono" style="left:289.00px;top:326.62px;height:14px;line-height:14px;color:#c3c8d1">diagnostics</div>
<div style="left:271.60px;top:340.20px;width:14.40px;height:14.70px;background:#385572;"></div>
<div class="t mono" style="left:276.65px;top:341.27px;height:14px;line-height:14px;color:#61afef">f</div>
<div class="t mono" style="left:289.00px;top:341.27px;height:14px;line-height:14px;color:#c3c8d1">diagnostics()</div>
<div style="left:271.60px;top:354.85px;width:14.40px;height:14.70px;background:#385572;"></div>
<div class="t mono" style="left:276.65px;top:355.93px;height:14px;line-height:14px;color:#61afef">f</div>
<div class="t mono" style="left:289.00px;top:355.93px;height:14px;line-height:14px;color:#c3c8d1">init_diagnostics()</div>
<div style="left:271.60px;top:369.50px;width:14.40px;height:14.70px;background:#385572;"></div>
<div class="t mono" style="left:276.65px;top:370.57px;height:14px;line-height:14px;color:#61afef">f</div>
<div class="t mono" style="left:289.00px;top:370.57px;height:14px;line-height:14px;color:#c3c8d1">find_enclosing_brackets(…)</div>
<div style="left:31.60px;top:507.00px;width:736.70px;height:13.80px;background:#21252b;"></div>
<div style="left:31.60px;top:507.00px;width:736.70px;height:1.00px;background:#14161a;"></div>
<div style="left:31.60px;top:507.50px;width:30.20px;height:13.30px;background:#e3757c;"></div>
<div class="t ui" style="left:37.50px;top:510.10px;height:12px;line-height:12px;color:#1f2228;letter-spacing:-0.337px;">Insert</div>
<svg style="left:67.00px;top:511.50px;width:6.60px;height:6.60px;color:#b9bfca" viewBox="0 0 24 24"><path d="M21.007 8.222A3.738 3.738 0 0 0 15.045 5.2a3.737 3.737 0 0 0 1.156 6.583 2.988 2.988 0 0 1-2.668 1.67h-2.99a4.456 4.456 0 0 0-2.989 1.165V7.4a3.737 3.737 0 1 0-1.494 0v9.117a3.776 3.776 0 1 0 1.816.099 2.99 2.99 0 0 1 2.668-1.667h2.99a4.484 4.484 0 0 0 4.223-3.039 3.736 3.736 0 0 0 3.25-3.687zM4.565 3.738a2.242 2.242 0 1 1 4.484 0 2.242 2.242 0 0 1-4.484 0zm4.484 16.441a2.242 2.242 0 1 1-4.484 0 2.242 2.242 0 0 1 4.484 0zm8.221-9.715a2.242 2.242 0 1 1 0-4.485 2.242 2.242 0 0 1 0 4.485z" fill="currentColor" /></svg>
<div class="t ui" style="left:79.70px;top:510.20px;height:12px;line-height:12px;;letter-spacing:-0.237px;">master</div>
<svg style="left:113.80px;top:511.80px;width:6.20px;height:6.20px;color:#b9bfca" viewBox="0 0 16 16"><circle cx="8" cy="8" r="6.300" fill="none" stroke="currentColor" stroke-width="1.300"/><path d="M5.300 5.300 L10.700 10.700 M10.700 5.300 L5.300 10.700" fill="none" stroke="currentColor" stroke-width="1.3" stroke-linecap="round" stroke-linejoin="round" /></svg>
<div class="t ui" style="left:123.60px;top:510.20px;height:12px;line-height:12px;">0</div>
<svg style="left:132.30px;top:511.80px;width:6.20px;height:6.20px;color:#b9bfca" viewBox="0 0 16 16"><path d="M8 2 L14.500 13.500 H1.500 Z" fill="none" stroke="currentColor" stroke-width="1.3" stroke-linecap="round" stroke-linejoin="round" /><path d="M8 6.500 V10" fill="none" stroke="currentColor" stroke-width="1.2" stroke-linecap="round" stroke-linejoin="round" /></svg>
<div class="t ui" style="left:141.50px;top:510.20px;height:12px;line-height:12px;">0</div>
<svg style="left:384px;top:511.900px;width:6.400px;height:6.400px" viewBox="0 0 16 16"><rect x="1" y="1.500" width="14" height="13" rx="1" fill="none" stroke="#d7dae0" stroke-width="1.600"/><rect x="1" y="1.500" width="7" height="13" fill="#d7dae0"/></svg>
<svg style="left:397px;top:511.900px;width:6.400px;height:6.400px" viewBox="0 0 16 16"><rect x="1" y="1.500" width="14" height="13" rx="1" fill="none" stroke="#d7dae0" stroke-width="1.600"/><rect x="1" y="8.500" width="14" height="6" fill="#d7dae0"/></svg>
<svg style="left:410px;top:511.900px;width:6.400px;height:6.400px" viewBox="0 0 16 16"><rect x="1" y="1.500" width="14" height="13" rx="1" fill="none" stroke="#9299a6" stroke-width="1.400"/><path d="M9.500 1.500 V14.500" stroke="#9299a6" stroke-width="1.400"/></svg>
<div class="t ui" style="left:622.50px;top:510.20px;height:12px;line-height:12px;;letter-spacing:-0.195px;">Ln 1130, Col 18, Char 41964</div>
<div class="t ui" style="left:728.00px;top:510.20px;height:12px;line-height:12px;;letter-spacing:-0.450px;">LF</div>
<div class="t ui" style="left:747.50px;top:510.20px;height:12px;line-height:12px;;letter-spacing:-0.278px;">Rust</div>
</div></body></html>
